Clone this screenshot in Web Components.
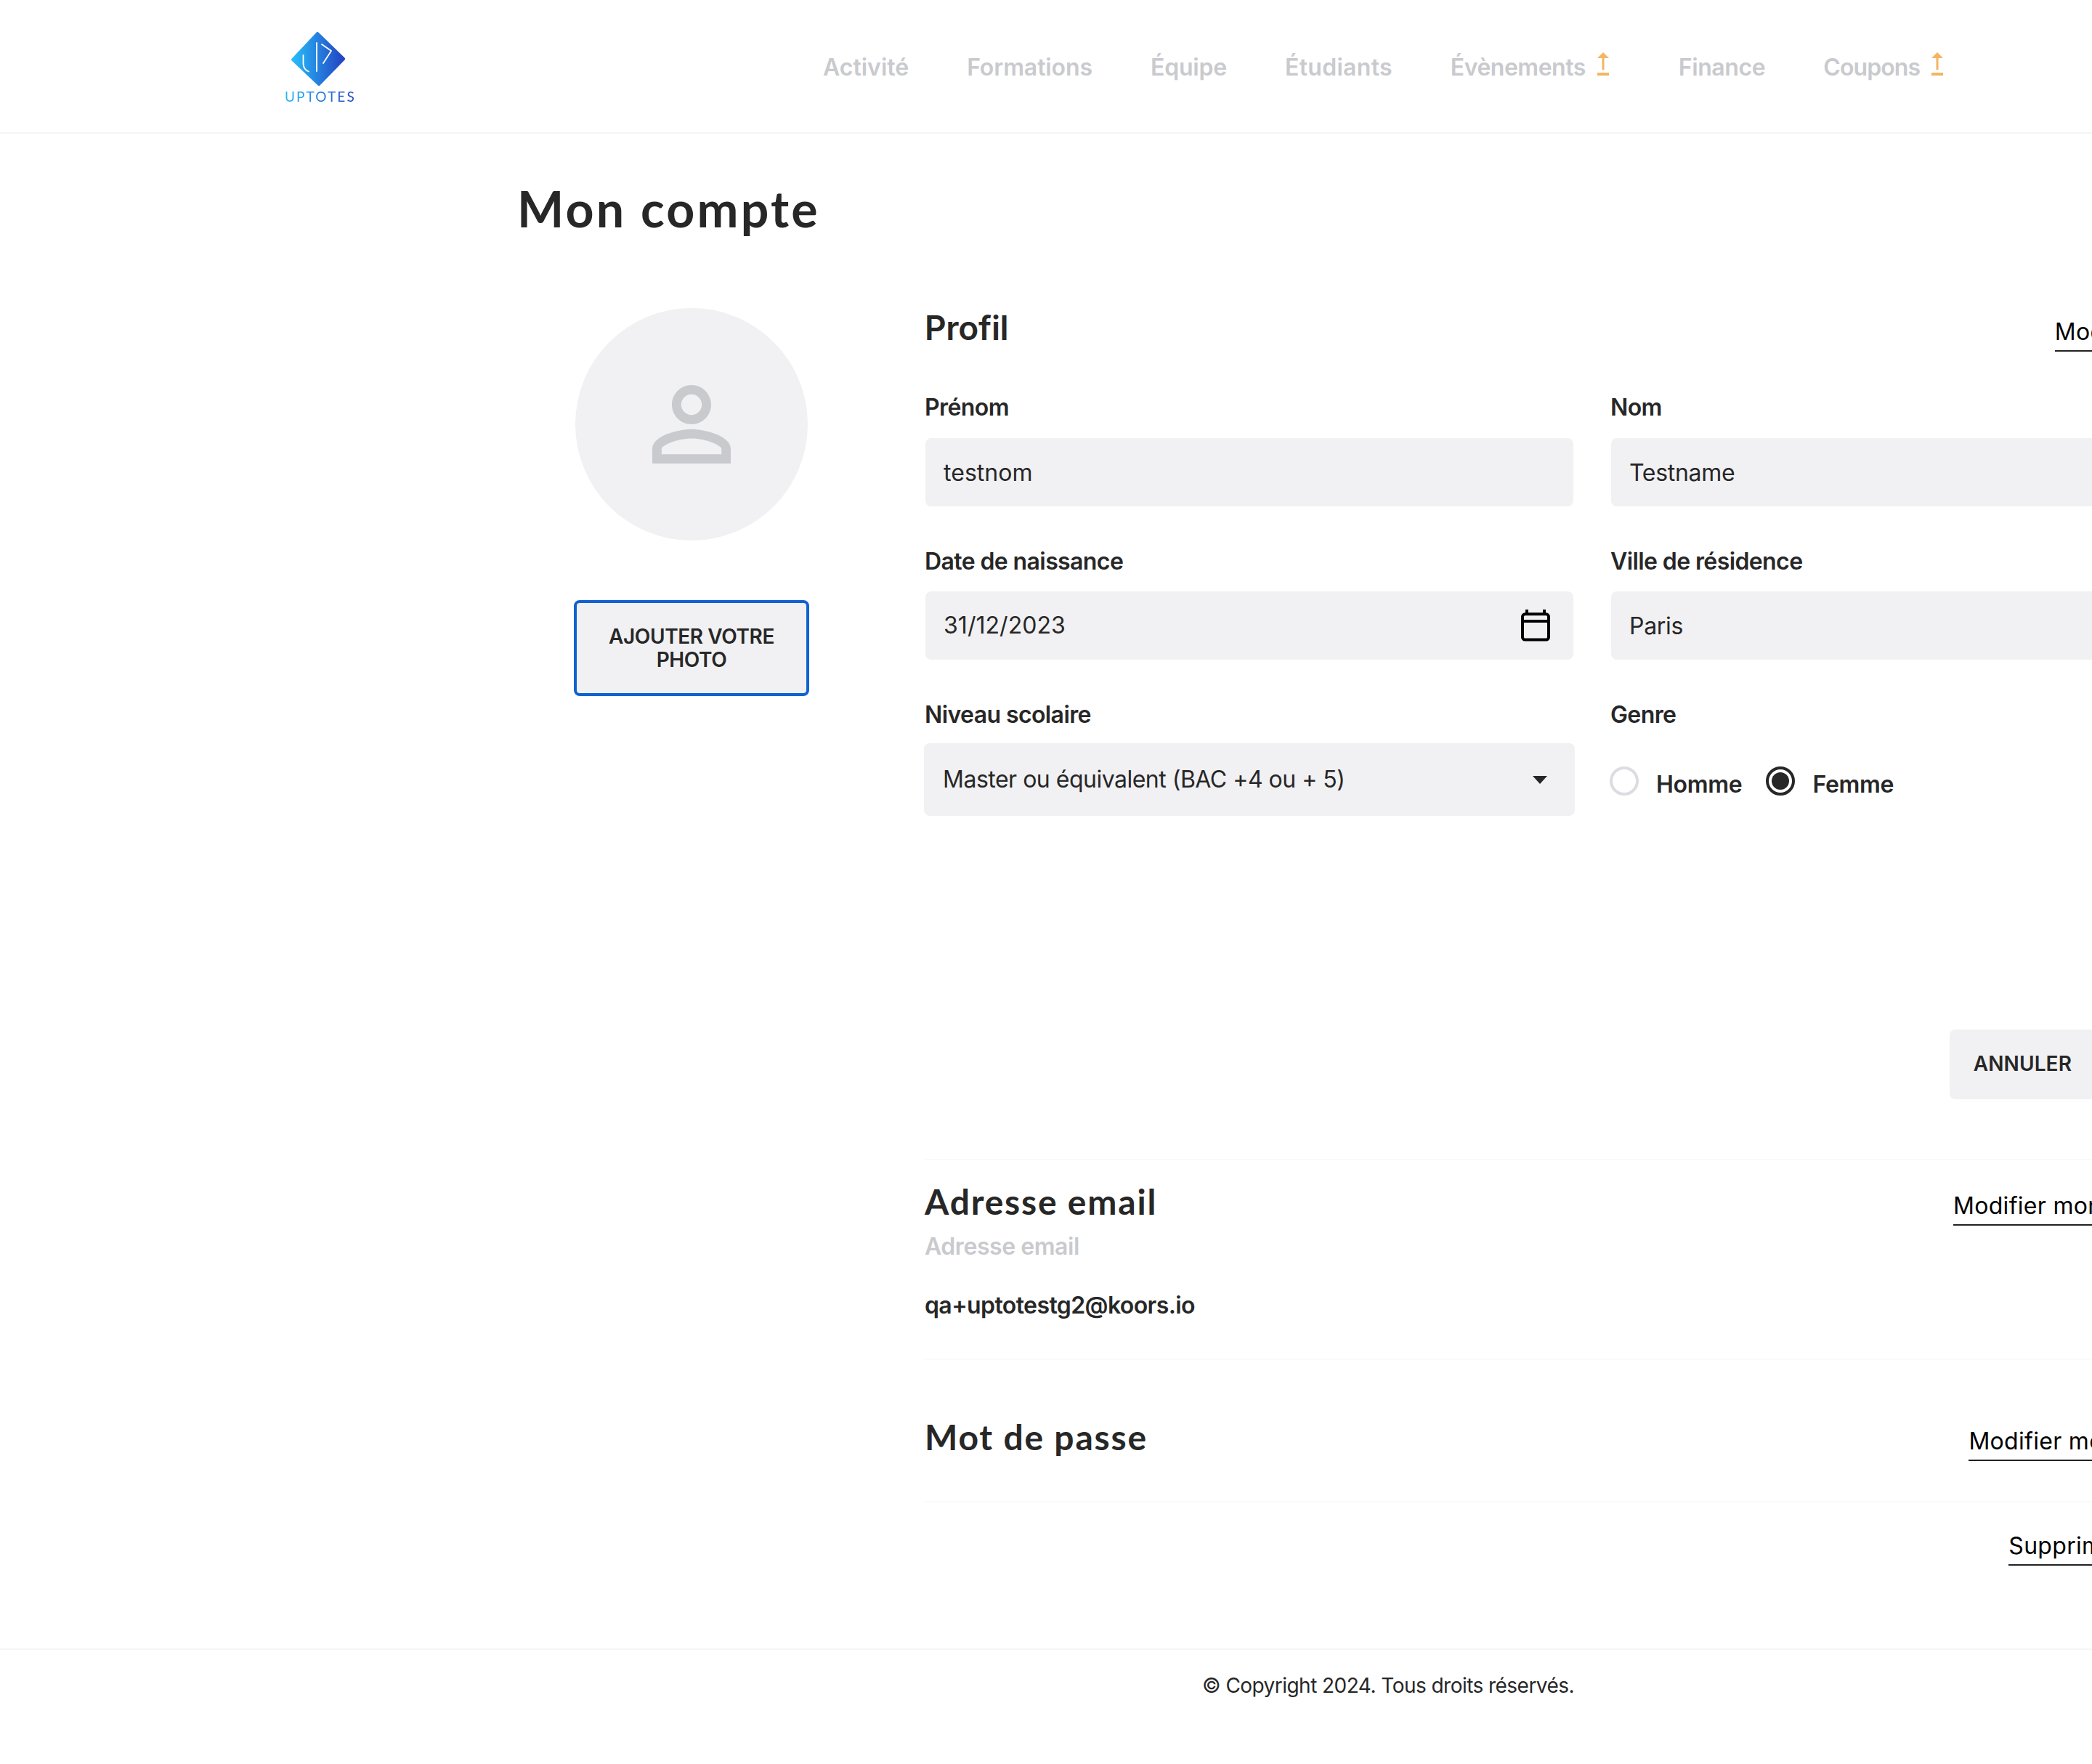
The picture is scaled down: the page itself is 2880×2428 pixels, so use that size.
<!DOCTYPE html>
<html lang="fr"><head><meta charset="utf-8"><title>Mon compte</title>
<style>
html,body{margin:0;padding:0;background:#fff;overflow:hidden;height:100%}
body{font-family:Inter,"Liberation Sans",sans-serif;color:#272727}
</style></head>
<body>
<x-app>
  <x-topbar></x-topbar>
  <x-main>
    <x-profile slot="profile">
      <x-field label="Prénom" value="testnom" style="--ls:.05px;--pt:1px"></x-field>
      <x-field label="Nom" value="Testname" style="--ls:-.3px;--pt:1px"></x-field>
      <x-field label="Date de naissance" value="31/12/2023" icon="calendar" style="--ls:.05px;--top:23px"></x-field>
      <x-field label="Ville de résidence" value="Paris" style="--ls:-.3px;--top:23px;--pt:1px"></x-field>
      <x-field label="Niveau scolaire" value="Master ou équivalent (BAC +4 ou + 5)" icon="caret" kind="select" style="--ls:-.5px"></x-field>
      <x-genre></x-genre>
    </x-profile>
  </x-main>
  <x-foot></x-foot>
</x-app>
<script>
function def(name,html){
  customElements.define(name,class extends HTMLElement{
    constructor(){super();this.attachShadow({mode:'open'});}
    connectedCallback(){
      const a=n=>this.getAttribute(n)||'';
      this.shadowRoot.innerHTML=typeof html==='function'?html(a):html;
    }
  });
}
const ARROW=`<svg width="16" height="32" viewBox="0 0 16 32" aria-hidden="true"><path d="M8 0L16 8H9.500V24H6.500V8H0Z" fill="#f4b563"/><rect y="28" width="16" height="4" fill="#f4b563"/></svg>`;
def('x-nav-item',a=>`<style>
:host{display:flex;align-items:flex-start;font:600 32px/40px Inter,sans-serif;color:#c9cace;letter-spacing:var(--ls,0);white-space:nowrap}
svg{margin:-1px 0 0 16px;display:block}
</style><span>${a('text')}</span>${a('alert')?ARROW:''}`);
def('x-logo',`<style>
:host{display:block;width:96px}
svg{display:block}
div{font:400 19px/18px Lato,sans-serif;letter-spacing:2.1px;margin-top:4px;white-space:nowrap;background:linear-gradient(90deg,#27b6f6,#2446c4);-webkit-background-clip:text;background-clip:text;color:transparent}
</style>
<svg width="96" height="76" viewBox="392 44 96 76"><defs><linearGradient id="g" x1="0" x2="1" y1="0" y2="0"><stop offset="0" stop-color="#27bdf9"/><stop offset="1" stop-color="#2343c3"/></linearGradient></defs>
<path d="M437 46L473 81L439 116L403 82Z" fill="url(#g)" stroke="url(#g)" stroke-width="4" stroke-linejoin="round"/>
<path d="M417.500 76V88Q418 96 425 98.500M436 59V98M443 61L456 70L445 87" fill="none" stroke="#fff" stroke-width="1.800" stroke-linecap="round" stroke-linejoin="round"/></svg>
<div>UPTOTES<sup style="font-size:6px;line-height:0;vertical-align:6px">’</sup></div>`);
def('x-topbar',`<style>
:host{display:flex;box-sizing:border-box;height:184px;border-bottom:2px solid #f5f5f6;padding:44px 0 0 392px}
nav{display:flex;margin-left:645px;padding-top:29px;height:40px}
x-nav-item{margin-right:80px}
.w{margin-right:96px}
</style><x-logo></x-logo>
<nav><x-nav-item text="Activité"></x-nav-item><x-nav-item text="Formations" style="--ls:-.1px"></x-nav-item><x-nav-item text="Équipe" style="--ls:-.2px"></x-nav-item><x-nav-item text="Étudiants" style="--ls:.3px"></x-nav-item><x-nav-item class="w" text="Évènements" alert="1" style="--ls:-.5px"></x-nav-item><x-nav-item text="Finance" style="--ls:-.4px"></x-nav-item><x-nav-item text="Coupons" alert="1" style="--ls:-.9px"></x-nav-item></nav>`);
def('x-link',a=>`<style>
:host{display:block;font:400 32px/40px Inter,sans-serif;color:#000;white-space:nowrap;letter-spacing:.3px}
span{display:block;padding-bottom:5px;border-bottom:2px solid #222}
</style><span>${a('text')}</span>`);
def('x-avatar',`<style>
:host{display:block;width:483px;box-sizing:border-box;padding-top:4px}
.c{width:320px;height:320px;margin-left:2px;border-radius:50%;background:#f1f1f3;display:flex;align-items:center;justify-content:center}
svg{display:block}
.b{box-sizing:border-box;width:324px;height:132px;margin-top:82px;border:4px solid #0f62d1;border-radius:8px;background:#f1f1f3;display:flex;align-items:center;justify-content:center;text-align:center;font:600 28px/32px Inter,sans-serif;color:#272727;letter-spacing:-.4px;padding:0 30px}
</style><div class="c"><svg width="162" height="162" viewBox="0 0 24 24"><path fill="#c9cace" d="M12 5.900c1.160 0 2.100.94 2.100 2.100s-.94 2.100-2.100 2.100S9.900 9.160 9.900 8s.94-2.100 2.100-2.100m0 9c2.970 0 6.100 1.460 6.100 2.100v1.100H5.900V17c0-.64 3.130-2.100 6.100-2.100M12 4C9.790 4 8 5.790 8 8s1.790 4 4 4 4-1.790 4-4-1.790-4-4-4zm0 9c-2.670 0-8 1.340-8 4v3h16v-3c0-2.660-5.330-4-8-4z"/></svg></div><div class="b">AJOUTER VOTRE PHOTO</div>`);
const ICONS={
 calendar:`<svg width="42" height="44" viewBox="0 0 42 44" fill="none" stroke="#000" stroke-width="4"><rect x="3" y="6.300" width="36" height="35.200" rx="3.500"/><path d="M3 16H39M9 0V6M33 0V6"/></svg>`,
 caret:`<svg width="20" height="11" viewBox="0 0 20 11"><path d="M0 0H20L10 11Z" fill="#272727"/></svg>`};
def('x-field',a=>{const sel=a('kind')==='select';return `<style>
:host{display:block}
label{display:block;font:600 32px/40px Inter,sans-serif;color:#272727;letter-spacing:-.6px;position:relative;top:2px}
.i{box-sizing:border-box;height:${sel?100:94}px;margin:${sel?'21px -1px 0':'var(--top,24px) 1px 0'};padding:var(--pt,0) ${sel?38:31}px 0 ${sel?26:25}px;background:#f1f1f3;border-radius:8px;display:flex;align-items:center;justify-content:space-between;font:400 32px/40px Inter,sans-serif;color:#272727;letter-spacing:var(--ls,0);white-space:nowrap}
</style><label>${a('label')}</label><div class="i"><span>${a('value')}</span>${ICONS[a('icon')]||''}</div>`});
def('x-radio',a=>`<style>
:host{display:flex;align-items:flex-start;font:600 32px/40px Inter,sans-serif;color:#272727;letter-spacing:-.3px}
i{box-sizing:border-box;width:40px;height:40px;border-radius:50%;border:4px solid ${a('on')?'#272727':'#dcdde1'};margin-right:24px;display:flex;align-items:center;justify-content:center}
b{display:${a('on')?'block':'none'};width:24px;height:24px;border-radius:50%;background:#272727}
span{display:block;margin-top:5px}
</style><i><b></b></i><span>${a('text')}</span>`);
def('x-genre',`<style>
:host{display:block}
label{display:block;font:600 32px/40px Inter,sans-serif;letter-spacing:-.6px;position:relative;top:2px}
div{display:flex;gap:33px;margin:53px 0 0 -1px}
</style><label>Genre</label><div><x-radio text="Homme"></x-radio><x-radio text="Femme" on="1"></x-radio></div>`);
def('x-profile',`<style>
:host{display:block;width:1837px}
.h{display:flex;justify-content:space-between;align-items:flex-start;height:60px;margin-bottom:59px}
h2{margin:0;font:600 46px/60px Inter,sans-serif;color:#272727;letter-spacing:-.3px;position:relative;top:1px}
x-link{margin:17px -12px 0 0}
.g{display:grid;grid-template-columns:894px 893px;column-gap:50px;row-gap:54px;width:1837px}
.a{display:flex;justify-content:flex-end;margin-top:294px;padding-right:225px}
.a div{box-sizing:border-box;height:96px;padding:0 33px;background:#f1f1f3;border-radius:8px;font:600 28px/94px Inter,sans-serif;color:#272727;letter-spacing:.1px}
</style><div class="h"><h2>Profil</h2><x-link text="Modifier mon profil"></x-link></div><div class="g"><slot></slot></div><div class="a"><div>ANNULER</div></div>`);
def('x-row',a=>`<style>
:host{display:block;box-sizing:border-box;border-bottom:2px solid #fafafa}
.t{display:flex;justify-content:space-between;align-items:flex-start;height:60px}
h2{margin:0;font:700 48px/60px Lato,sans-serif;color:#272727;letter-spacing:1.8px}
x-link{margin-top:16px}
</style><div class="t"><h2>${a('title')}</h2><x-link text="${a('link')}" style="margin-right:${a('mr')}px"></x-link></div><slot></slot>`);
def('x-main',`<style>
:host{display:block;padding-left:712px;height:2085px;box-sizing:border-box;padding-top:63px}
h1{margin:0;font:700 68px/80px Lato,sans-serif;color:#272727;letter-spacing:3.2px}
.r{display:flex;margin:93px 0 0 78px;width:2320px}
.c{width:1837px}
.l{height:2px;background:#fafafa;margin-top:82px}
x-row{margin-top:27px}
.s{font:600 32px/40px Inter,sans-serif;color:#c9cace;letter-spacing:-.45px;margin-top:12px}
.e{font:600 32px/40px Inter,sans-serif;color:#272727;letter-spacing:-.6px;margin-top:41px;padding-bottom:53px}
.d{display:flex;justify-content:flex-end;margin-top:40px}
.d x-link{margin-right:-17px}
</style><h1>Mon compte</h1><div class="r"><x-avatar></x-avatar><div class="c"><slot name="profile"></slot><div class="l"></div>
<x-row title="Adresse email" mr="-6" link="Modifier mon adresse email"><div class="s">Adresse email</div><div class="e">qa+uptotestg2@koors.io</div></x-row>
<x-row title="Mot de passe" mr="-22" link="Modifier mon mot de passe" style="padding-bottom:58px;margin-top:76px"></x-row>
<div class="d"><x-link text="Supprimer mon compte"></x-link></div></div></div>`);
def('x-foot',`<style>
:host{display:block;box-sizing:border-box;height:159px;border-top:2px solid #f5f5f6;padding:31px 0 0 1655px;font:400 28px/36px Inter,sans-serif;color:#272727;letter-spacing:-.54px;white-space:nowrap}
</style>© Copyright 2024. Tous droits réservés.`);
def('x-app',`<style>:host{display:block;width:3824px}</style><slot></slot>`);
</script>
</body></html>
